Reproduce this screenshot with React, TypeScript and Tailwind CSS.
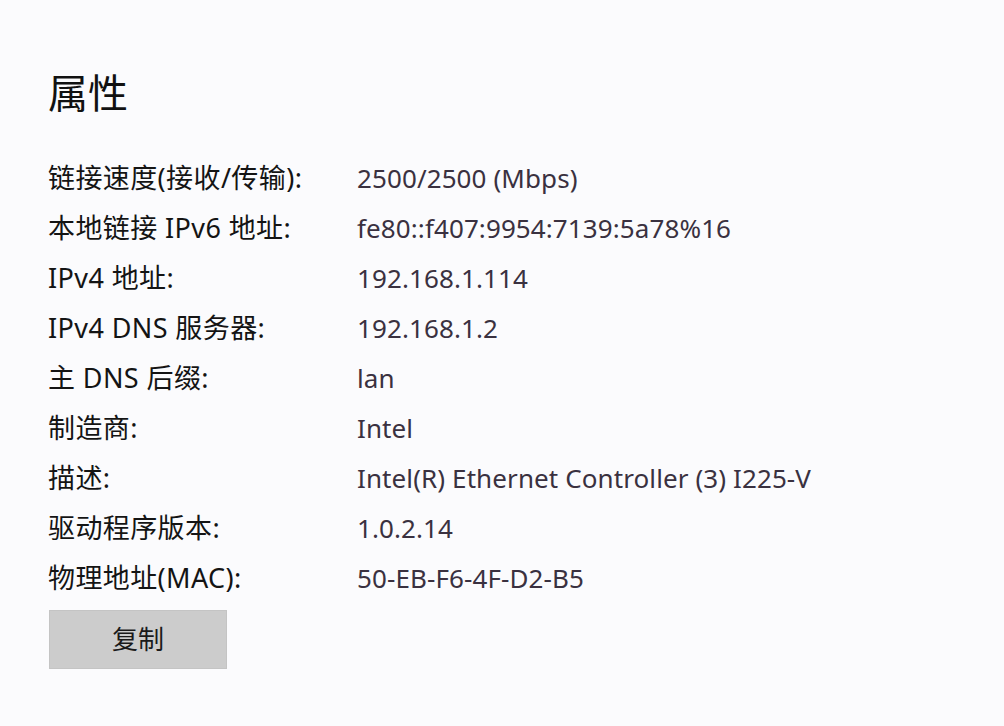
import React from "react";

const rows: [string, string][] = [
  ["链接速度(接收/传输):", "2500/2500 (Mbps)"],
  ["本地链接 IPv6 地址:", "fe80::f407:9954:7139:5a78%16"],
  ["IPv4 地址:", "192.168.1.114"],
  ["IPv4 DNS 服务器:", "192.168.1.2"],
  ["主 DNS 后缀:", "lan"],
  ["制造商:", "Intel"],
  ["描述:", "Intel(R) Ethernet Controller (3) I225-V"],
  ["驱动程序版本:", "1.0.2.14"],
  ["物理地址(MAC):", "50-EB-F6-4F-D2-B5"],
];

export default function App() {
  return (
    <div
      className="w-[1004px] h-[726px] bg-[#fbfbfd] pl-[48px] pt-[66px] overflow-hidden"
      style={{ fontFamily: '"Noto Sans", "Noto Sans CJK SC", sans-serif' }}
    >
      <h1 className="text-[40px] leading-[54px] text-[#111111] font-normal">属性</h1>
      <div className="mt-[33px] flex flex-col">
        {rows.map(([k, v]) => (
          <div key={k} className="flex items-center h-[50px]">
            <div className="w-[309px] text-[27px] text-[#141414] tracking-[0.4px] whitespace-nowrap">{k}</div>
            <div className="text-[26px] text-[#3a3140] tracking-[0.1px] whitespace-nowrap">{v}</div>
          </div>
        ))}
      </div>
      <button className="mt-[7px] ml-[1px] w-[178px] h-[59px] bg-[#cccccc] border border-[#c4c4c4] text-[26px] text-[#1a1a1a] flex items-center justify-center">
        复制
      </button>
    </div>
  );
}
